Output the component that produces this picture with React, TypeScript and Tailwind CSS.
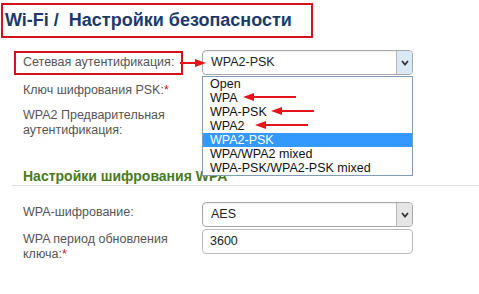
import React from 'react';

const font = { fontFamily: '"Liberation Sans", Arial, sans-serif' };

const options = ['Open', 'WPA', 'WPA-PSK', 'WPA2', 'WPA2-PSK', 'WPA/WPA2 mixed', 'WPA-PSK/WPA2-PSK mixed'];

function Chevron() {
  return (
    <svg width="8" height="6" viewBox="0 0 8 6">
      <path d="M1 1 L4 4.5 L7 1" fill="none" stroke="#333" strokeWidth="1.8" />
    </svg>
  );
}

function Arrow({ x1, x2, y }: { x1: number; x2: number; y: number }) {
  // tip at x2
  const dir = x2 > x1 ? 1 : -1;
  return (
    <g>
      <line x1={x1} y1={y} x2={x2 - dir * 8} y2={y} stroke="#e8141b" strokeWidth="2" />
      <polygon points={`${x2},${y} ${x2 - dir * 11},${y - 4} ${x2 - dir * 11},${y + 4}`} fill="#e8141b" />
    </g>
  );
}

function Select({ value, active }: { value: string; active?: boolean }) {
  return (
    <div className="flex h-[25px] w-[211px] rounded-[4px] border border-[#a9a9a9] bg-white shadow-[inset_0_1px_2px_rgba(0,0,0,0.08)]">
      <div className="flex flex-1 items-center pl-[8px] text-[12.5px] text-[#222]">{value}</div>
      <div
        className={`flex w-[16px] items-center justify-center rounded-r-[3px] border-l border-[#b5b5b5] ${
          active ? 'bg-[#dbe8f6]' : 'bg-[#e6e6e6]'
        }`}
      >
        <Chevron />
      </div>
    </div>
  );
}

export default function App() {
  return (
    <div className="relative h-[294px] w-[479px] overflow-hidden bg-white" style={font}>
      <div className="ml-[1px] mt-[3px] flex h-[35px] w-[312px] items-center border-2 border-[#d4121b] pl-[2px]">
        <span className="whitespace-nowrap text-[18px] font-bold text-[#1b3a6a]">Wi-Fi /&nbsp; Настройки безопасности</span>
      </div>

      <div className="mt-[12px] text-[12.5px] leading-[15px] text-[#555]">
        <div className="flex h-[25px] items-center">
          <div className="ml-[14px] flex h-[24px] w-[169px] items-center border-2 border-[#d4121b] pl-[7px]">
            Сетевая аутентификация:
          </div>
          <div className="ml-[19px]">
            <Select value="WPA2-PSK" active />
          </div>
        </div>
        <div className="mt-[3px] flex h-[25px] items-center">
          <div className="ml-[23px] w-[179px]">
            Ключ шифрования PSK:<span className="text-[#d4121b]">*</span>
          </div>
          <div className="h-[25px] w-[211px] rounded-[4px] border border-[#bbb]" />
        </div>
        <div className="mt-[5px] flex h-[60px] items-start">
          <div className="ml-[23px] w-[179px]">
            WPA2 Предварительная
            <br />
            аутентификация:
          </div>
        </div>

        <div className="ml-[23px] h-[16px] text-[14px] font-bold leading-[16px] text-[#4a7a1f]">
          Настройки шифрования WPA
        </div>
        <div className="ml-[12px] mt-[1px] h-px bg-[#e0e0e0]" />

        <div className="mt-[16px] flex items-start">
          <div className="ml-[23px] w-[179px] pt-[3px]">WPA-шифрование:</div>
          <Select value="AES" />
        </div>
        <div className="mt-[2px] flex items-start">
          <div className="ml-[23px] w-[179px] pt-[3px]">
            WPA период обновления
            <br />
            ключа:<span className="text-[#d4121b]">*</span>
          </div>
          <div className="flex h-[25px] w-[211px] items-center rounded-[4px] border border-[#bbb] pl-[7px] text-[#222]">
            3600
          </div>
        </div>
      </div>

      {/* open dropdown list */}
      <div className="absolute left-[202px] top-[76px] w-[211px] border border-[#7f9db9] bg-white text-[12.5px] leading-[14px] text-[#111]">
        {options.map((o) => (
          <div
            key={o}
            className={`h-[14px] pl-[7px] ${o === 'WPA2-PSK' ? 'bg-[#3399ff] text-white' : ''}`}
          >
            {o}
          </div>
        ))}
      </div>

      <svg className="pointer-events-none absolute left-0 top-0" width="479" height="294">
        <Arrow x1={180} x2={206} y={63} />
        <Arrow x1={296} x2={243} y={97} />
        <Arrow x1={314} x2={271} y={111} />
        <Arrow x1={308} x2={255} y={125} />
      </svg>
    </div>
  );
}
